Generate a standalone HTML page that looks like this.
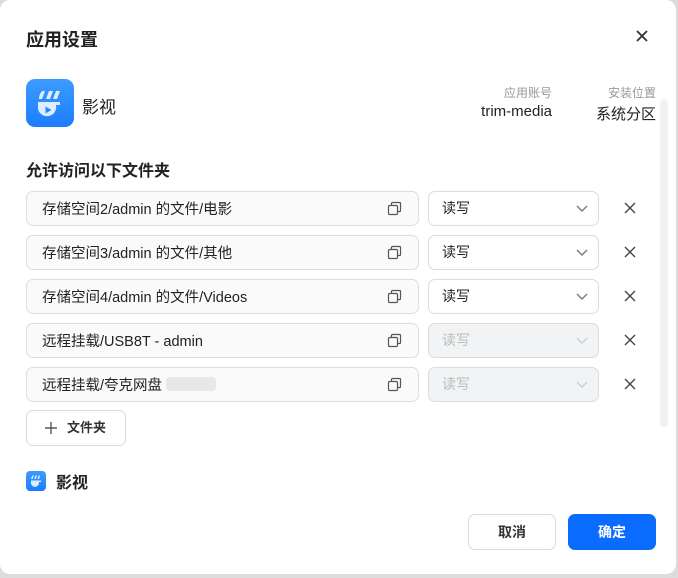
<!DOCTYPE html><html><head><meta charset="utf-8"><style>
*{box-sizing:border-box;margin:0;padding:0}
body{width:678px;height:578px;background:#dcdcdc;font-family:"Liberation Sans","Noto Sans CJK SC",sans-serif;position:relative;overflow:hidden;color:#222}
.card{position:absolute;left:0;top:0;width:676px;height:574px;background:#fff;border-radius:10px}
.a{position:absolute}
.inp{position:absolute;left:26px;width:393px;height:35px;border:1px solid #dedede;border-radius:7px;background:#fafafa;font-size:14.5px;display:flex;align-items:center;padding-left:15px;padding-bottom:1px;color:#222}
.sel{position:absolute;left:428px;width:171px;height:35px;border:1px solid #dcdcdc;border-radius:7px;background:#fff;font-size:14px;line-height:33px;padding-left:13px;color:#222}
.sel.d{background:#f2f3f5;color:#bbb}
.copy{position:absolute;left:360px;top:9px}
.chev{position:absolute;left:147px;top:13px}
.x{position:absolute;left:624px}
</style></head><body><div class="card">
<div class="a" style="left:26px;top:26px;font-size:18px;font-weight:bold">应用设置</div>
<svg class="a" style="left:635px;top:29px" width="14" height="14"><path d="M2 2L12 12M12 2L2 12" stroke="#333" stroke-width="1.8"/></svg>
<div class="a" style="left:26px;top:79px;width:48px;height:48px;border-radius:9px;background:linear-gradient(180deg,#3d9bff,#1c7dff)">
<svg width="48" height="48"><g fill="#dbeeff"><path d="M13 20c0-4 2-8 4-8h2l-3 8z"/><path d="M20 20l3-8h4l-3 8z"/><path d="M27 20l3-8h4l-3 8z"/><path d="M12 23h22v3h-4a9 9 0 1 1-18 4z"/></g><path d="M19.5 27.5l6 3.5-6 3.5z" fill="#2a86ff"/></svg></div>
<div class="a" style="left:82px;top:93px;font-size:17px">影视</div>
<div class="a" style="left:470px;top:84px;width:82px;text-align:right;font-size:12px;color:#999">应用账号</div>
<div class="a" style="left:450px;top:103px;width:102px;text-align:right;font-size:15px">trim-media</div>
<div class="a" style="left:580px;top:84px;width:76px;text-align:right;font-size:12px;color:#999">安装位置</div>
<div class="a" style="left:580px;top:103px;width:76px;text-align:right;font-size:15px">系统分区</div>
<div class="a" style="left:660px;top:100px;width:8px;height:327px;background:#f0f0f0;border-radius:4px"></div>
<div class="a" style="left:26px;top:157px;font-size:16px;font-weight:bold">允许访问以下文件夹</div>

<div class="inp" style="top:191px">存储空间2/admin 的文件/电影<svg class="copy" width="15" height="15"><rect x="1.5" y="4.5" width="9" height="9" rx="1.2" fill="none" stroke="#555" stroke-width="1.2"/><path d="M4.5 4.5V2.5a1 1 0 0 1 1-1h7a1 1 0 0 1 1 1v7a1 1 0 0 1-1 1h-2" fill="none" stroke="#555" stroke-width="1.2"/></svg></div>
<div class="sel" style="top:191px">读写<svg class="chev" width="12" height="8"><path d="M1 1l5 5 5-5" fill="none" stroke="#777" stroke-width="1.4"/></svg></div>
<svg class="x" style="top:202px" width="12" height="12"><path d="M1 1L11 11M11 1L1 11" stroke="#444" stroke-width="1.4"/></svg>

<div class="inp" style="top:235px">存储空间3/admin 的文件/其他<svg class="copy" width="15" height="15"><rect x="1.5" y="4.5" width="9" height="9" rx="1.2" fill="none" stroke="#555" stroke-width="1.2"/><path d="M4.5 4.5V2.5a1 1 0 0 1 1-1h7a1 1 0 0 1 1 1v7a1 1 0 0 1-1 1h-2" fill="none" stroke="#555" stroke-width="1.2"/></svg></div>
<div class="sel" style="top:235px">读写<svg class="chev" width="12" height="8"><path d="M1 1l5 5 5-5" fill="none" stroke="#777" stroke-width="1.4"/></svg></div>
<svg class="x" style="top:246px" width="12" height="12"><path d="M1 1L11 11M11 1L1 11" stroke="#444" stroke-width="1.4"/></svg>

<div class="inp" style="top:279px">存储空间4/admin 的文件/Videos<svg class="copy" width="15" height="15"><rect x="1.5" y="4.5" width="9" height="9" rx="1.2" fill="none" stroke="#555" stroke-width="1.2"/><path d="M4.5 4.5V2.5a1 1 0 0 1 1-1h7a1 1 0 0 1 1 1v7a1 1 0 0 1-1 1h-2" fill="none" stroke="#555" stroke-width="1.2"/></svg></div>
<div class="sel" style="top:279px">读写<svg class="chev" width="12" height="8"><path d="M1 1l5 5 5-5" fill="none" stroke="#777" stroke-width="1.4"/></svg></div>
<svg class="x" style="top:290px" width="12" height="12"><path d="M1 1L11 11M11 1L1 11" stroke="#444" stroke-width="1.4"/></svg>

<div class="inp" style="top:323px">远程挂载/USB8T - admin<svg class="copy" width="15" height="15"><rect x="1.5" y="4.5" width="9" height="9" rx="1.2" fill="none" stroke="#555" stroke-width="1.2"/><path d="M4.5 4.5V2.5a1 1 0 0 1 1-1h7a1 1 0 0 1 1 1v7a1 1 0 0 1-1 1h-2" fill="none" stroke="#555" stroke-width="1.2"/></svg></div>
<div class="sel d" style="top:323px">读写<svg class="chev" width="12" height="8"><path d="M1 1l5 5 5-5" fill="none" stroke="#ccc" stroke-width="1.4"/></svg></div>
<svg class="x" style="top:334px" width="12" height="12"><path d="M1 1L11 11M11 1L1 11" stroke="#444" stroke-width="1.4"/></svg>

<div class="inp" style="top:367px">远程挂载/夸克网盘<span style="display:inline-block;width:50px;height:14px;background:#e8e8e8;border-radius:4px;margin-left:4px"></span><svg class="copy" width="15" height="15"><rect x="1.5" y="4.5" width="9" height="9" rx="1.2" fill="none" stroke="#555" stroke-width="1.2"/><path d="M4.5 4.5V2.5a1 1 0 0 1 1-1h7a1 1 0 0 1 1 1v7a1 1 0 0 1-1 1h-2" fill="none" stroke="#555" stroke-width="1.2"/></svg></div>
<div class="sel d" style="top:367px">读写<svg class="chev" width="12" height="8"><path d="M1 1l5 5 5-5" fill="none" stroke="#ccc" stroke-width="1.4"/></svg></div>
<svg class="x" style="top:378px" width="12" height="12"><path d="M1 1L11 11M11 1L1 11" stroke="#444" stroke-width="1.4"/></svg>

<div class="a" style="left:26px;top:410px;width:100px;height:36px;border:1px solid #dcdcdc;border-radius:7px;font-size:13px;font-weight:bold;line-height:34px;padding-left:40px;color:#333">文件夹
<svg class="a" style="left:18px;top:11px" width="12" height="12"><path d="M6 0V12M0 6H12" stroke="#555" stroke-width="1.4"/></svg></div>
<div class="a" style="left:26px;top:471px;width:20px;height:20px;border-radius:4px;background:linear-gradient(180deg,#3d9bff,#1c7dff)"><svg width="20" height="20"><g fill="#dbeeff"><path d="M5 8l1.2-3.5h1.6L6.6 8zM8.2 8l1.2-3.5h1.6L9.8 8zM11.4 8l1.2-3.5h1.6L13 8z"/><path d="M5 9.5h10v1.5h-2a4 4 0 1 1-8 1.5z"/></g></svg></div>
<div class="a" style="left:56px;top:469px;font-size:16px;font-weight:bold">影视</div>
<div class="a" style="left:468px;top:514px;width:88px;height:36px;border:1px solid #dcdcdc;border-radius:7px;text-align:center;line-height:34px;font-size:14px;font-weight:bold;color:#333">取消</div>
<div class="a" style="left:568px;top:514px;width:88px;height:36px;background:#0a6cff;border-radius:7px;text-align:center;line-height:36px;font-size:14px;font-weight:bold;color:#fff">确定</div>
</div></body></html>
